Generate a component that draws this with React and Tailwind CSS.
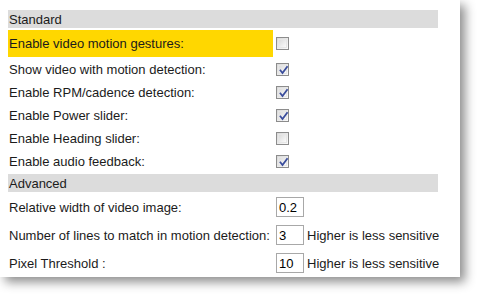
import React from "react";

function Checkbox({ checked }) {
  return (
    <div className="w-[13px] h-[13px] border border-[#8c8c8c] bg-gradient-to-br from-[#d8d8d8] to-[#fbfbfb] relative box-border">
      <div className="absolute inset-[1px] border border-[#e6e6e6] bg-gradient-to-br from-[#dcdcdc] to-[#fafafa]" />
      {checked && (
        <svg className="absolute left-[1px] top-[1px]" width="11" height="11" viewBox="0 0 11 11">
          <path d="M2.5 5.5 L4.5 8 L9 2" fill="none" stroke="#3a4d9c" strokeWidth="1.8" strokeLinecap="square" />
        </svg>
      )}
    </div>
  );
}

function Header({ children }) {
  return (
    <div className="h-[18px] w-[430px] bg-[#dcdcdc] pl-[1px] flex items-center">{children}</div>
  );
}

function CheckRow({ label, checked, highlight }) {
  return (
    <div className={`flex ${highlight ? "h-[27px]" : "h-[21px]"}`}>
      <div className={`w-[265px] pl-[1px] flex items-center ${highlight ? "bg-[#ffd700]" : ""}`}>{label}</div>
      <div className="ml-[3px] flex items-center">
        <Checkbox checked={checked} />
      </div>
    </div>
  );
}

function InputRow({ label, value, note }) {
  return (
    <div className="flex h-[26px] items-start">
      <div className="w-[265px] pl-[1px] h-[26px] flex items-center whitespace-nowrap">{label}</div>
      <div className="ml-[3px] mt-[3px] w-[28px] h-[20px] border border-[#a8a8a8] bg-white flex items-center pl-[2px] text-black">
        {value}
      </div>
      {note && <div className="ml-[3px] h-[26px] flex items-center whitespace-nowrap">{note}</div>}
    </div>
  );
}

export default function App() {
  return (
    <div className="w-[483px] h-[297px] bg-white" style={{ fontFamily: '"Liberation Sans", Arial, sans-serif' }}>
      <div className="w-[460px] h-[277px] bg-white shadow-[5px_5px_10px_rgba(0,0,0,0.45)] pl-[8px] pt-[10px] text-[13px] text-[#1b1b1b] leading-none flex flex-col gap-[2px]">
        <Header>Standard</Header>
        <CheckRow label="Enable video motion gestures:" highlight />
        <CheckRow label="Show video with motion detection:" checked />
        <CheckRow label="Enable RPM/cadence detection:" checked />
        <CheckRow label="Enable Power slider:" checked />
        <CheckRow label="Enable Heading slider:" />
        <CheckRow label="Enable audio feedback:" checked />
        <Header>Advanced</Header>
        <InputRow label="Relative width of video image:" value="0.2" />
        <InputRow label="Number of lines to match in motion detection:" value="3" note="Higher is less sensitive" />
        <InputRow label="Pixel Threshold :" value="10" note="Higher is less sensitive" />
      </div>
    </div>
  );
}
